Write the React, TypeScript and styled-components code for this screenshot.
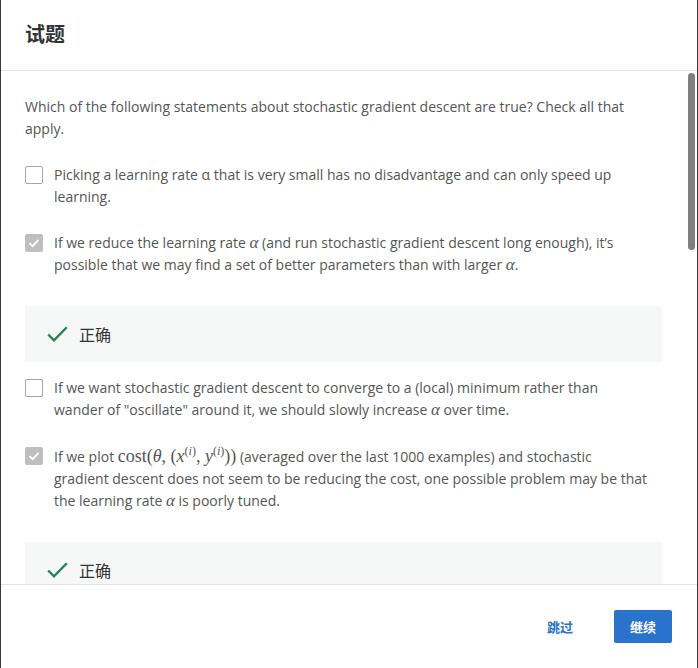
import React from "react";
import styled, { createGlobalStyle } from "styled-components";

const Global = createGlobalStyle`
  html, body { margin: 0; padding: 0; }
  body {
    background: #3a3a3a;
    font-family: "Open Sans", "Noto Sans CJK SC", sans-serif;
  }
`;

const Dialog = styled.div`
  margin: 0 1px;
  height: 668px;
  background: #fff;
  display: flex;
  flex-direction: column;
  overflow: hidden;
`;

const Header = styled.div`
  height: 71px;
  box-sizing: border-box;
  flex: none;
  display: flex;
  align-items: center;
  padding: 0 0 3px 24px;
  border-bottom: 1px solid #e3e3e3;
`;

const Title = styled.h2`
  margin: 0;
  font-family: "Noto Sans CJK SC", sans-serif;
  font-size: 20px;
  font-weight: 700;
  color: #333;
`;

const ScrollArea = styled.div`
  flex: 1;
  position: relative;
  min-height: 0;
`;

const Scroll = styled.div`
  height: 100%;
  box-sizing: border-box;
  overflow-y: auto;
  padding: 25px 35px 0 24px;
  scrollbar-width: none;
  &::-webkit-scrollbar { display: none; }
`;

const Thumb = styled.div`
  position: absolute;
  top: 2px;
  right: 2px;
  width: 7px;
  height: 177px;
  border-radius: 4px;
  background: #808080;
`;

const Content = styled.div`
  color: #555;
  font-size: 14px;
  line-height: 22px;
`;

const Question = styled.p`
  margin: 0 14px 24px 0;
`;

const Option = styled.label`
  display: flex;
  gap: 11px;
  margin: 0 14px 24px 0;
  align-items: flex-start;
`;

const Box = styled.span<{ $checked?: boolean }>`
  flex: none;
  width: 18px;
  height: 18px;
  margin-top: 2px;
  box-sizing: border-box;
  border-radius: 2px;
  border: ${(p) => (p.$checked ? "none" : "1.5px solid #a6a6a6")};
  background: ${(p) => (p.$checked ? "#bfbfbf" : "#fff")};
  display: flex;
  align-items: center;
  justify-content: center;
`;

const OptionText = styled.span`
  flex: 1;
`;

const Math = styled.span`
  font-family: "Liberation Serif", "DejaVu Serif", serif;
  font-size: 18px;
`;

const MI = styled.i`
  font-family: "Liberation Serif", "DejaVu Serif", serif;
  font-size: 17px;
`;

const Sup = styled.sup`
  font-size: 12px;
  line-height: 0;
  vertical-align: 7px;
`;

const Feedback = styled.div`
  margin: 30px 0 15px;
  background: #f5f8f7;
  height: 56px;
  display: flex;
  align-items: center;
  padding-left: 22px;
  gap: 11px;
`;

const FeedbackText = styled.span`
  font-family: "Noto Sans CJK SC", sans-serif;
  font-size: 16px;
  color: #333;
`;

const Footer = styled.div`
  height: 83px;
  flex: none;
  border-top: 1px solid #e3e3e3;
  display: flex;
  align-items: center;
  justify-content: flex-end;
  padding-right: 25px;
  gap: 41px;
`;

const LinkButton = styled.button`
  background: none;
  border: none;
  padding: 0;
  font-family: "Noto Sans CJK SC", sans-serif;
  font-weight: 700;
  font-size: 13px;
  color: #2a73cc;
  cursor: pointer;
`;

const Primary = styled.button`
  width: 58px;
  height: 33px;
  background: #2a73cc;
  border: none;
  border-radius: 2px;
  color: #fff;
  font-family: "Noto Sans CJK SC", sans-serif;
  font-weight: 700;
  font-size: 13px;
  cursor: pointer;
`;

const Tick = () => (
  <svg width="14" height="14" viewBox="0 0 14 14">
    <path d="M2.5 7.2 L5.6 10.2 L11.5 3.8" fill="none" stroke="#fff" strokeWidth="1.8" />
  </svg>
);

const GreenCheck = () => (
  <svg width="21" height="18" viewBox="0 0 21 18">
    <path d="M1.2 9.5 L7 15.3 L19.8 2.2" fill="none" stroke="#1f8354" strokeWidth="2.3" />
  </svg>
);

const Correct = () => (
  <Feedback>
    <GreenCheck />
    <FeedbackText>正确</FeedbackText>
  </Feedback>
);

export default function App() {
  return (
    <>
      <Global />
      <Dialog>
        <Header>
          <Title>试题</Title>
        </Header>
        <ScrollArea>
          <Scroll>
            <Content>
              <Question>
                Which of the following statements about stochastic gradient descent are true? Check all that apply.
              </Question>
              <Option>
                <Box />
                <OptionText>
                  Picking a learning rate α that is very small has no disadvantage and can only speed up learning.
                </OptionText>
              </Option>
              <Option>
                <Box $checked>
                  <Tick />
                </Box>
                <OptionText>
                  If we reduce the learning rate <MI>α</MI> (and run stochastic gradient descent long enough), it’s
                  possible that we may find a set of better parameters than with larger <MI>α</MI>.
                </OptionText>
              </Option>
              <Correct />
              <Option>
                <Box />
                <OptionText>
                  If we want stochastic gradient descent to converge to a (local) minimum rather than wander of
                  "oscillate" around it, we should slowly increase <MI>α</MI> over time.
                </OptionText>
              </Option>
              <Option>
                <Box $checked>
                  <Tick />
                </Box>
                <OptionText>
                  If we plot{" "}
                  <Math>
                    cost(<i>θ</i>, (<i>x</i>
                    <Sup>
                      (<i>i</i>)
                    </Sup>
                    , <i>y</i>
                    <Sup>
                      (<i>i</i>)
                    </Sup>
                    ))
                  </Math>{" "}
                  (averaged over the last 1000 examples) and stochastic gradient descent does not seem to be reducing
                  the cost, one possible problem may be that the learning rate <MI>α</MI> is poorly tuned.
                </OptionText>
              </Option>
              <Correct />
            </Content>
          </Scroll>
          <Thumb />
        </ScrollArea>
        <Footer>
          <LinkButton>跳过</LinkButton>
          <Primary>继续</Primary>
        </Footer>
      </Dialog>
    </>
  );
}
